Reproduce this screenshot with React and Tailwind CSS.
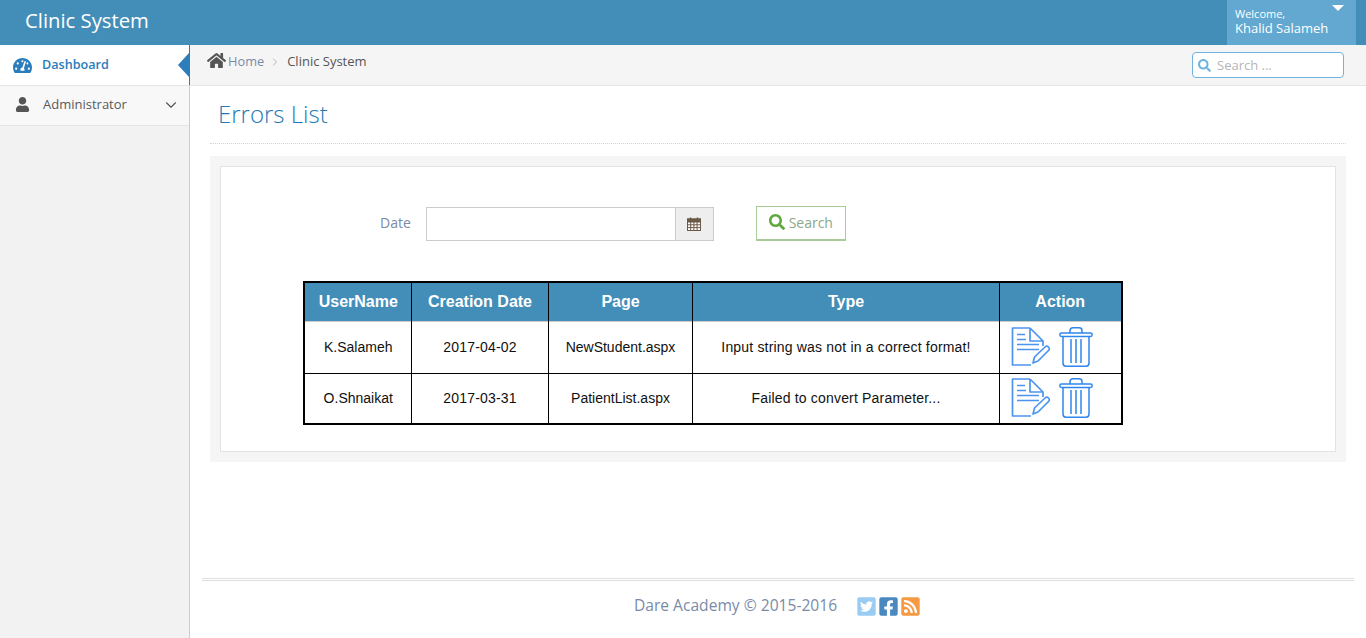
import React from "react";
import { FaHome, FaUser, FaSearch, FaTwitterSquare, FaFacebookSquare, FaRssSquare, FaTachometerAlt } from "react-icons/fa";
import { ChevronDown, ChevronRight } from "lucide-react";

const rows = [
  { user: "K.Salameh", date: "2017-04-02", page: "NewStudent.aspx", type: "Input string was not in a correct format!" },
  { user: "O.Shnaikat", date: "2017-03-31", page: "PatientList.aspx", type: "Failed to convert Parameter..." },
];

// Blue outlined note icon from the action column
const DocIcon = () => (
  <svg width="40" height="40" viewBox="0 0 40 40" fill="none" stroke="#4d94ee" strokeWidth="1.7" strokeLinejoin="round">
    <path d="M19 1H1.500v37H20M19 1l13 13v5M19 1v13h13" />
    <path d="M6 7.500h8M6 12.500h9M6 17.500h22M6 22.500h22" />
    <path d="M22 36l1.500-6L34 20c1-1 2.500-1 3.500 0s1 2.500 0 3.500L27 34z" />
  </svg>
);

const TrashIcon = () => (
  <svg width="34" height="40" viewBox="0 0 34 40" fill="none" stroke="#2f86ec" strokeWidth="1.5" strokeLinejoin="round">
    <path d="M11 6V3.500C11 2 12 .8 14 .8h6c2 0 3 1.200 3 2.700V6" />
    <rect x=".8" y="6" width="32.400" height="3.400" rx="1.700" />
    <path d="M4 10v26c0 2 1.200 3.200 3 3.200h20c1.800 0 3-1.200 3-3.200V10" />
    <path d="M12 12v24M17 12v24M22 12v24" />
  </svg>
);

const CalendarIcon = () => (
  <svg width="14" height="14" viewBox="0 0 14 14" fill="none">
    <rect x=".5" y="2" width="13" height="11.500" fill="#fff" stroke="#6b5a45" />
    <rect x=".5" y="2" width="13" height="3" fill="#6b5a45" stroke="#6b5a45" />
    <path d="M3.500 .5v3M10.500 .5v3" stroke="#6b5a45" strokeWidth="1.500" />
    <path d="M3.700 5v8.500M6.900 5v8.500M10.100 5v8.500M.5 7.800h13M.5 10.600h13" stroke="#6b5a45" />
  </svg>
);

const Sidebar = () => (
  <aside className="w-[190px] shrink-0 bg-[#f2f2f2] border-r border-[#cccccc]">
    <div className="relative h-[41px] bg-white border-b border-[#e5e5e5] flex items-center pl-[13px] text-[12.6px] font-semibold text-[#2b7dbc]">
      <FaTachometerAlt className="text-[19px] mr-[10px]" />
      <span>Dashboard</span>
      <span className="absolute right-[-1px] top-0 h-[40px] w-[1px] bg-[#2b7dbc]" />
      <span className="absolute right-0 top-[8px] w-0 h-0 border-y-[12px] border-y-transparent border-r-[11px] border-r-[#2b7dbc]" />
    </div>
    <div className="h-[40px] bg-[#f8f8f8] border-b border-[#e5e5e5] flex items-center pl-[15px] pb-[2px] text-[13px] text-[#585858]">
      <FaUser className="text-[15px] mr-[13px] text-[#555]" />
      <span className="flex-1">Administrator</span>
      <ChevronDown size={18} strokeWidth={1.5} className="mr-[9px] text-[#555]" />
    </div>
  </aside>
);

const Breadcrumbs = () => (
  <div className="h-[41px] bg-[#f5f5f5] border-b border-[#e5e5e5] flex items-start justify-between pl-[17px] pr-[22px]">
    <div className="flex items-center h-[33px] text-[12.8px]">
      <FaHome className="text-[19px] text-[#555] mr-[2px] -mt-[2px]" />
      <span className="text-[#7a8ba8]">Home</span>
      <ChevronRight size={12} strokeWidth={1.75} className="text-[#a6aab3] ml-[5px] mr-[6px]" />
      <span className="text-[#555] text-[13px]">Clinic System</span>
    </div>
    <div className="mt-[7px] w-[152px] h-[26px] bg-white border border-[#6fb3e0] rounded-[4px] flex items-center pl-[5px] pt-[1px] text-[13px] text-[#b5b5b5]">
      <FaSearch className="text-[13px] text-[#6fb3e0] mr-[6px]" />
      <span>Search ...</span>
    </div>
  </div>
);

const SearchForm = () => (
  <div className="flex items-center pt-[39px] pl-[159px]">
    <span className="text-[14px] text-[#7a8ba8] mr-[15px] -mt-[2px]">Date</span>
    <div className="flex h-[34px] w-[288px]">
      <div className="flex-1 bg-white border border-[#cccccc]" />
      <div className="w-[38px] bg-[#eeeeee] border border-l-0 border-[#cccccc] flex items-center justify-center">
        <CalendarIcon />
      </div>
    </div>
    <div className="ml-[42px] w-[90px] h-[35px] bg-white border border-[#a8cb97] border-b-2 flex items-center justify-center pb-[2px] text-[14px] text-[#8aa98a]">
      <FaSearch className="text-[16px] text-[#5ea83c] mr-[4px]" />
      <span>Search</span>
    </div>
  </div>
);

const ErrorsTable = () => (
  <table className="mt-[40px] ml-[82px] w-[820px] border-collapse border-2 border-black text-center text-[14px] text-[#111] table-fixed font-['Liberation_Sans',sans-serif]">
    <thead>
      <tr className="h-[39px] bg-[#438eb9] text-white text-[16px] font-bold border-b border-b-[#cccccc]">
        <th className="w-[107px] pl-[1px] border-r border-black font-bold">UserName</th>
        <th className="w-[137px] pl-[1px] border-r border-black font-bold">Creation Date</th>
        <th className="w-[144px] pl-[1px] border-r border-black font-bold">Page</th>
        <th className="w-[307px] pl-[1px] border-r border-black font-bold">Type</th>
        <th className="font-bold">Action</th>
      </tr>
    </thead>
    <tbody>
      {rows.map((row) => (
        <tr key={row.user} className="h-[51px] first:h-[52px] border-b border-black">
          <td className="pl-[1px] border-r border-black">{row.user}</td>
          <td className="pl-[1px] border-r border-black tracking-[0.2px]">{row.date}</td>
          <td className="pl-[1px] border-r border-black">{row.page}</td>
          <td className="pl-[1px] border-r border-black tracking-[0.18px]">{row.type}</td>
          <td className="pl-[11px]">
            <div className="flex items-center gap-[8px]">
              <DocIcon />
              <TrashIcon />
            </div>
          </td>
        </tr>
      ))}
    </tbody>
  </table>
);

const Footer = () => (
  <footer className="mt-[116px] mx-[12px] border-t-[3px] border-double border-[#e0e0e0] h-[59px] flex items-center justify-center pb-[6px]">
    <span className="text-[15.6px] text-[#7a8ba8] ml-[-1px]">Dare Academy © 2015-2016</span>
    <div className="flex items-center ml-[19px] gap-[1px] text-[21px]">
      <FaTwitterSquare className="text-[#99ccf3]" />
      <FaFacebookSquare className="text-[#4a89c0]" />
      <FaRssSquare className="text-[#f59942]" />
    </div>
  </footer>
);

export default function App() {
  return (
    <div className="h-[638px] flex flex-col bg-white font-['Open_Sans',sans-serif] overflow-hidden">
      <header className="h-[45px] shrink-0 bg-[#438eb9] flex items-center justify-between pl-[25px] pr-[10px]">
        <span className="text-[20.3px] text-white -mt-[4px]">Clinic System</span>
        <div className="relative w-[129px] h-[45px] bg-[#62a8d1] pl-[8px] pt-[7px] text-white">
          <div className="text-[11px] leading-[14px]">Welcome,</div>
          <div className="text-[13px] leading-[15px]">Khalid Salameh</div>
          <span className="absolute right-[12px] top-[5px] w-0 h-0 border-x-[6px] border-x-transparent border-t-[6px] border-t-white" />
        </div>
      </header>
      <div className="flex flex-1 min-h-0">
        <Sidebar />
        <main className="flex-1 min-w-0">
          <Breadcrumbs />
          <div className="mx-[20px] h-[58px] border-b border-dotted border-[#d5d5d5] flex items-center pl-[8px] pb-[2px]">
            <h1 className="text-[24px] font-light text-[#2679b5]">Errors List</h1>
          </div>
          <div className="mt-[12px] mx-[20px] p-[10px] bg-[#f5f5f5]">
            <div className="h-[286px] bg-white border border-[#e3e3e3]">
              <SearchForm />
              <ErrorsTable />
            </div>
          </div>
          <Footer />
        </main>
      </div>
    </div>
  );
}
